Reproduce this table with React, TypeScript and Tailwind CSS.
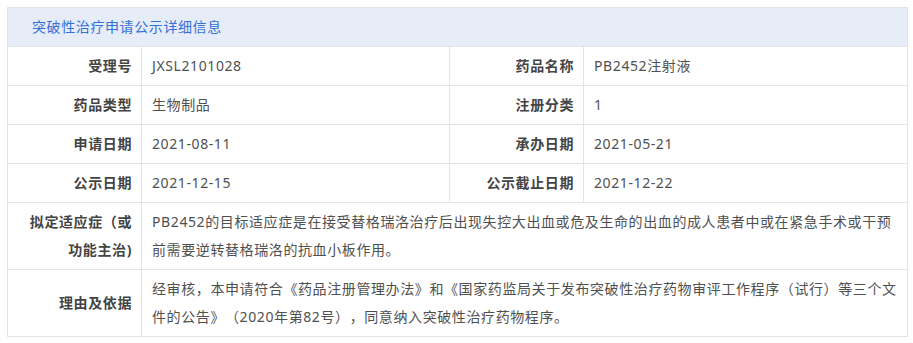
const rows: [string, string, string, string][] = [
  ['受理号', 'JXSL2101028', '药品名称', 'PB2452注射液'],
  ['药品类型', '生物制品', '注册分类', '1'],
  ['申请日期', '2021-08-11', '承办日期', '2021-05-21'],
  ['公示日期', '2021-12-15', '公示截止日期', '2021-12-22'],
];

const wide: [string, string][] = [
  [
    '拟定适应症（或功能主治)',
    'PB2452的目标适应症是在接受替格瑞洛治疗后出现失控大出血或危及生命的出血的成人患者中或在紧急手术或干预前需要逆转替格瑞洛的抗血小板作用。',
  ],
  [
    '理由及依据',
    '经审核，本申请符合《药品注册管理办法》和《国家药监局关于发布突破性治疗药物审评工作程序（试行）等三个文件的公告》（2020年第82号），同意纳入突破性治疗药物程序。',
  ],
];

const labelCls =
  'border border-[#e4e4e4] pl-[10px] pr-[9px] py-[5px] text-right align-middle font-bold text-[#444]';
const valueCls = 'border border-[#e4e4e4] pl-[10px] pr-[6px] py-[5px] text-left align-top text-[#505050]';

export default function App() {
  return (
    <div
      className="min-h-screen bg-white p-[7px] text-[14px] leading-[28px] tracking-[0.6px] [text-spacing-trim:space-all]"
      style={{ fontFamily: '"Noto Sans", "Noto Sans CJK SC", sans-serif' }}
    >
      <table className="w-[900px] table-fixed border-collapse">
        <colgroup>
          <col className="w-[134px]" />
          <col className="w-[308px]" />
          <col className="w-[134px]" />
          <col className="w-[324px]" />
        </colgroup>
        <tbody>
          <tr>
            <td colSpan={4} className="border border-[#e4e4e4] bg-[#e6edf8] py-[5px] pl-[24px] text-left text-[#3370d8]">
              突破性治疗申请公示详细信息
            </td>
          </tr>
          {rows.map(([l1, v1, l2, v2]) => (
            <tr key={l1}>
              <td className={labelCls}>{l1}</td>
              <td className={valueCls}>{v1}</td>
              <td className={labelCls}>{l2}</td>
              <td className={valueCls}>{v2}</td>
            </tr>
          ))}
          {wide.map(([l, v]) => (
            <tr key={l}>
              <td className={labelCls}>{l}</td>
              <td colSpan={3} className={valueCls}>
                {v}
              </td>
            </tr>
          ))}
        </tbody>
      </table>
    </div>
  );
}
